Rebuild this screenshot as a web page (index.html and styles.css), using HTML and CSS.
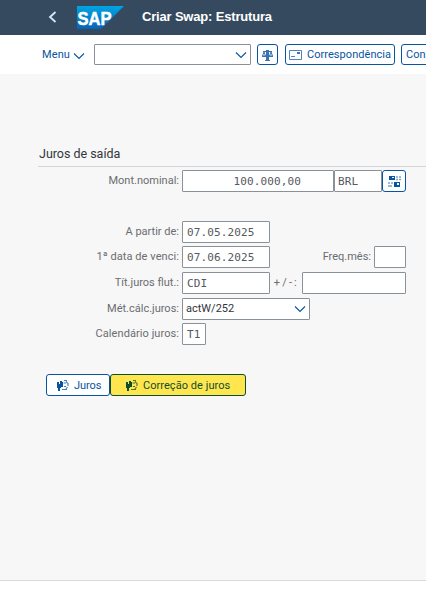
FILE: index.html
```
<!DOCTYPE html>
<html lang="pt">
<head>
<meta charset="utf-8">
<title>Criar Swap: Estrutura</title>
<link rel="stylesheet" href="styles.css">
</head>
<body>
<header class="shell">
  <svg class="back" width="10" height="12" viewBox="0 0 10 12"><path d="M7.500 1 2 6l5.500 5" fill="none" stroke="#d1e8ff" stroke-width="1.800"/></svg>
  <svg class="logo" width="48" height="24" viewBox="0 0 48 24">
    <defs><linearGradient id="g" x1="0" y1="0" x2="0" y2="1"><stop offset="0" stop-color="#00a5e3"/><stop offset="1" stop-color="#0862b7"/></linearGradient></defs>
    <path d="M0 0h47L24 23H0z" fill="url(#g)"/>
    <text class="logo-text" x="0.500" y="18.500" textLength="34" lengthAdjust="spacingAndGlyphs">SAP</text>
  </svg>
  <h1 class="title">Criar Swap: Estrutura</h1>
</header>
<nav class="toolbar">
  <span class="menu">Menu</span>
  <svg class="menu-arrow" width="12" height="8" viewBox="0 0 12 8"><path class="chevron" d="m1 1.500 5 5 5-5"/></svg>
  <div class="field command"><svg width="12" height="8" viewBox="0 0 12 8"><path class="chevron" d="m1 1.500 5 5 5-5"/></svg></div>
  <button class="btn btn-scale"><svg width="11" height="12" viewBox="0 0 11 12"><path d="M3 11.500h5M1 2.500h3l1-1h1l1 1h3M2 3 .5 7h3zM9 3 7.500 7h3z" fill="none" stroke="#0854a0" stroke-width=".8"/><path d="M0 7h4v1H0zM7 7h4v1H7zM4 1h3v10H4z" fill="#3975b2"/></svg></button>
  <button class="btn btn-mail"><svg width="13" height="10" viewBox="0 0 13 10"><path d="M.5.500h12v9H.500zM2 6.500h4" fill="none" stroke="#4e84b9"/><path d="M8 2h3v2H8z" fill="#3975b2"/></svg><span>Correspondência</span></button>
  <button class="btn btn-con"><span>Con</span></button>
</nav>
<main class="content">
  <h2 class="heading">Juros de saída</h2>
  <div class="row nominal"><label>Mont.nominal:</label><div class="field mono amount">100.000,00</div><div class="field mono currency">BRL</div><button class="btn btn-grid"><svg width="13" height="11" viewBox="0 0 13 11"><path d="M1 0h6v4H1zM6 6h6v5H6z" fill="#0854a0"/><path d="M4 1h2v1H4zM9 7h2v2H9z" fill="#fff"/><path d="M8 1h2M11 1h2M8 3.500h2M11 3.500h2M0 7h2M3 7h2M0 10h4" stroke="#7ba4cc" stroke-width="1.500"/></svg></button></div>
  <div class="row start"><label>A partir de:</label><div class="field mono date">07.05.2025</div></div>
  <div class="row maturity"><label class="wide">1ª data de venci:</label><div class="field mono date">07.06.2025</div><label class="freq">Freq.mês:</label><div class="field months"></div></div>
  <div class="row rate"><label>Tít.juros flut.:</label><div class="field mono date">CDI</div><label class="spread-label">+/-:</label><div class="field spread"></div></div>
  <div class="row method"><label>Mét.cálc.juros:</label><div class="field select"><span>actW/252</span><svg width="12" height="8" viewBox="0 0 12 8"><path class="chevron" d="m1 1.500 5 5 5-5"/></svg></div></div>
  <div class="row calendar"><label class="wide">Calendário juros:</label><div class="field mono cal">T1</div></div>
  <div class="actions">
    <button class="btn btn-rates"><svg width="12" height="12" viewBox="0 0 12 12"><path d="M0 3h2v2h1V2h2v1h1v5H4v1H3v3H1V9H0z" fill="currentColor"/><path d="M7 1.500h3M9 2.500l1.500 1.500M6.500 4H9M11 4v3M7 7.500h2M10.500 8 9 10M5 10.500h5" fill="none" stroke="currentColor" stroke-width="1.200" opacity=".75"/></svg><span>Juros</span></button><button class="btn btn-update"><svg width="12" height="12" viewBox="0 0 12 12"><path d="M0 3h2v2h1V2h2v1h1v5H4v1H3v3H1V9H0z" fill="currentColor"/><path d="M7 1.500h3M9 2.500l1.500 1.500M6.500 4H9M11 4v3M7 7.500h2M10.500 8 9 10M5 10.500h5" fill="none" stroke="currentColor" stroke-width="1.200" opacity=".75"/></svg><span>Correção de juros</span></button>
  </div>
</main>
</body>
</html>
```
FILE: styles.css
```
* { box-sizing: border-box; }
body { margin: 0; height: 612px; overflow: hidden; background: #fff; font-family: Roboto, "Liberation Sans", sans-serif; font-size: 11px; color: #32363a; }
svg { display: block; flex: none; }
.shell { height: 35px; display: flex; align-items: flex-start; background: #354a5f; }
.back { margin: 11px 0 0 48px; }
.logo { margin: 6px 0 0 19px; }
.logo-text { font: bold 18px "Liberation Sans", sans-serif; fill: #fff; stroke: #fff; stroke-width: .5px; }
.title { margin: 9px 0 0 17px; font: bold 13px/16px "Liberation Sans", sans-serif; letter-spacing: -.18px; color: #fff; white-space: nowrap; }
.toolbar { height: 39px; display: flex; align-items: center; background: #fff; color: #0854a0; overflow: hidden; }
.menu { flex: none; width: 31px; margin-left: 42px; white-space: nowrap; letter-spacing: .1px; }
.menu-arrow { margin-top: 2px; }
.chevron { fill: none; stroke: #0854a0; stroke-width: 1.1px; }
.field { height: 22px; flex: none; display: flex; align-items: center; border: 1px solid #89919a; border-radius: 1px; background: #fff; padding: 0 4px; white-space: nowrap; }
.command { width: 157px; height: 21px; margin-left: 9px; padding-right: 3px; justify-content: flex-end; }
.btn { flex: none; height: 21px; margin: 0; padding: 0; display: flex; align-items: center; border: 1px solid #0854a0; border-radius: 3px; background: #fff; color: #0854a0; font: inherit; white-space: nowrap; }
.btn-scale { width: 21px; margin-left: 6px; justify-content: center; }
.btn-mail { width: 110px; margin-left: 7px; padding-left: 3px; gap: 5px; letter-spacing: .05px; }
.btn-con { width: 60px; margin-left: 6px; padding-left: 4px; }
.content { height: 507px; background: #f7f7f7; border-bottom: 1px solid #d9d9d9; overflow: hidden; }
.heading { margin: 72px 0 0 38px; height: 21px; padding-left: 1px; font-size: 12.5px; font-weight: normal; line-height: 16px; letter-spacing: -.02px; border-bottom: 1px solid #d5d5d5; }
.row { height: 22px; display: flex; align-items: center; }
label { width: 179px; margin-right: 3px; text-align: right; color: #6a6d70; white-space: nowrap; flex: none; line-height: 22px; padding-bottom: 1px; }
.wide { letter-spacing: .07px; }
.mono { font-family: "DejaVu Sans Mono", monospace; font-size: 11px; letter-spacing: .13px; color: #55595d; }
.nominal { margin-top: 3px; }
.amount { width: 152px; padding-right: 32px; justify-content: flex-end; }
.currency { width: 48px; padding-left: 3px; }
.btn-grid { width: 24px; justify-content: center; }
.actions .btn, .row .btn { height: 22px; }
.start { margin-top: 29px; }
.date { width: 88px; }
.maturity { margin-top: 3px; }
.freq { width: 101px; }
.months { width: 32px; }
.rate { margin-top: 4px; }
.spread-label { width: 29px; letter-spacing: 2.2px; }
.spread { width: 104px; }
.method { margin-top: 4px; }
.select { width: 128px; padding: 0 3px; justify-content: space-between; }
.select span { padding-bottom: 2px; }
.calendar { margin-top: 3px; }
.cal { width: 24px; }
.actions { display: flex; margin: 29px 0 0 46px; }
.btn-rates { width: 64px; padding-left: 10px; gap: 5px; letter-spacing: -.1px; }
.btn-update { width: 136px; padding-left: 15px; gap: 5px; letter-spacing: .05px; background: #ffe64f; border-color: #0b4f2d; color: #0b4f2d; }
```
